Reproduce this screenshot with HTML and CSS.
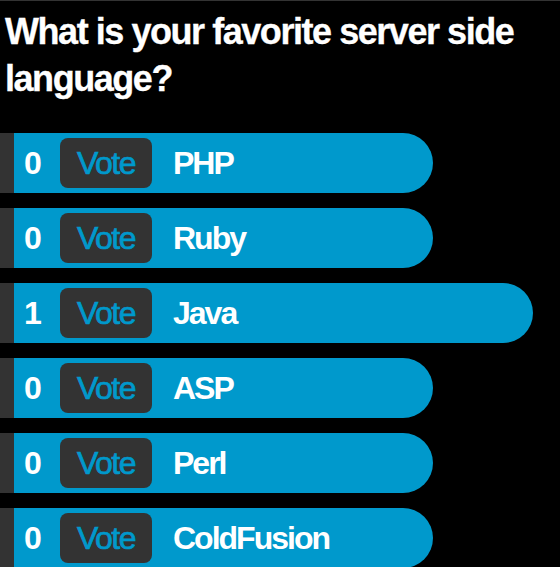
FILE: index.html
```html
<!DOCTYPE html>
<html>
<head>
<meta charset="utf-8">
<link rel="stylesheet" href="styles.css">
</head>
<body>
<div class="page">
  <h1 class="question">What is your favorite server side language?</h1>
  <ul class="poll">
    <li class="option"><span class="count">0</span><span class="vote">Vote</span><span class="name">PHP</span></li>
    <li class="option"><span class="count">0</span><span class="vote">Vote</span><span class="name">Ruby</span></li>
    <li class="option option-wide"><span class="count">1</span><span class="vote">Vote</span><span class="name">Java</span></li>
    <li class="option"><span class="count">0</span><span class="vote">Vote</span><span class="name">ASP</span></li>
    <li class="option"><span class="count">0</span><span class="vote">Vote</span><span class="name">Perl</span></li>
    <li class="option"><span class="count">0</span><span class="vote">Vote</span><span class="name">ColdFusion</span></li>
  </ul>
</div>
</body>
</html>
```
FILE: styles.css
```css
html, body {
  margin: 0;
  padding: 0;
  background: #000;
  height: 100%;
  overflow: hidden;
}
.page {
  border-top: 1px solid #333;
  font-family: "Liberation Sans", Arial, Helvetica, sans-serif;
  color: #fff;
}
.question {
  margin: 7px 0 31px 5px;
  font-size: 36px;
  line-height: 47px;
  font-weight: bold;
  letter-spacing: -1.45px;
  -webkit-text-stroke: 0.3px #fff;
}
.poll {
  list-style: none;
  margin: 0;
  padding: 0;
  display: flex;
  flex-direction: column;
  gap: 15px;
}
.option {
  display: flex;
  align-items: center;
  box-sizing: border-box;
  width: 433px;
  height: 60px;
  background: #0099cc;
  border-left: 14px solid #333;
  border-radius: 0 30px 30px 0;
  font-size: 32px;
  letter-spacing: -1px;
}
.option-wide {
  width: 533px;
}
.count {
  box-sizing: border-box;
  width: 46px;
  padding-left: 10px;
  font-weight: bold;
}
.vote {
  display: flex;
  align-items: center;
  justify-content: center;
  width: 92px;
  height: 50px;
  background: #333;
  border-radius: 8px;
  color: #0099cc;
  letter-spacing: -1.5px;
  -webkit-text-stroke: 0.7px #0099cc;
}
.name {
  margin-left: 21px;
  font-weight: bold;
  letter-spacing: -2px;
}
```
